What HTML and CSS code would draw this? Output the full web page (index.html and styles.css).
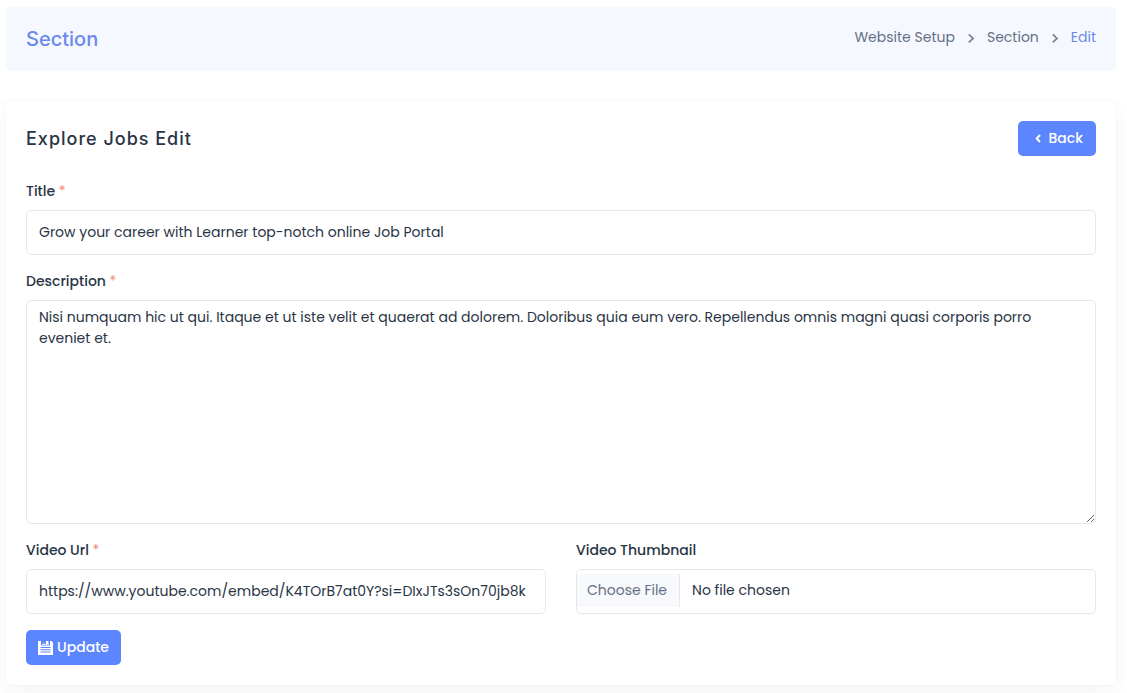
FILE: index.html
```html
<!DOCTYPE html>
<html lang="en">
<head>
  <meta charset="utf-8">
  <meta name="viewport" content="width=device-width, initial-scale=1">
  <title>Section Edit</title>
  <link rel="stylesheet" href="styles.css">
</head>
<body>
  <main class="page">
    <header class="page-header">
      <h1 class="page-title">Section</h1>
      <nav aria-label="Breadcrumb">
        <ol class="breadcrumb">
          <li><a href="#">Website Setup</a></li>
          <li><svg class="chevron" viewBox="0 0 8 10" aria-hidden="true"><path d="M1.8 1.4 6 5.4 1.8 9.4"/></svg><a href="#">Section</a></li>
          <li><svg class="chevron" viewBox="0 0 8 10" aria-hidden="true"><path d="M1.8 1.4 6 5.4 1.8 9.4"/></svg><a class="current" href="#" aria-current="page">Edit</a></li>
        </ol>
      </nav>
    </header>

    <section class="card">
      <div class="card-header">
        <h2 class="card-title">Explore Jobs Edit</h2>
        <a class="btn btn-back" href="#">
          <svg class="icon-back" viewBox="0 0 6 9" aria-hidden="true"><path d="M5 1 1.7 4.5 5 8"/></svg>
          Back
        </a>
      </div>

      <form class="form">
        <div class="field">
          <label class="label" for="title">Title <span class="required">*</span></label>
          <input class="control" id="title" type="text" value="Grow your career with Learner top-notch online Job Portal">
        </div>
        <div class="field">
          <label class="label" for="description">Description <span class="required">*</span></label>
          <textarea class="control textarea" id="description">Nisi numquam hic ut qui. Itaque et ut iste velit et quaerat ad dolorem. Doloribus quia eum vero. Repellendus omnis magni quasi corporis porro eveniet et.</textarea>
        </div>
        <div class="row">
          <div class="field">
            <label class="label" for="video-url">Video Url <span class="required">*</span></label>
            <input class="control" id="video-url" type="text" value="https://www.youtube.com/embed/K4TOrB7at0Y?si=DIxJTs3sOn70jb8k">
          </div>
          <div class="field">
            <label class="label" for="thumbnail">Video Thumbnail</label>
            <input class="control file" id="thumbnail" type="file">
          </div>
        </div>
        <button class="btn btn-update" type="submit">
          <svg class="icon-save" viewBox="0 0 15 14" aria-hidden="true">
            <path fill="currentColor" fill-rule="evenodd" d="M0 0H3V4.5H12V0H13.5L15 1.5V14H0ZM2.5 6V7H12.5V6ZM2.5 8.3V9.3H12.5V8.3ZM2.5 10.6V11.6H12.5V10.6Z"/>
            <path fill="currentColor" d="M4 2.8H11V3.7H4ZM8 0H10.4V3H8Z"/>
          </svg>
          Update
        </button>
      </form>
    </section>
  </main>
</body>
</html>
```
FILE: styles.css
```css
:root {
  --primary: #5c86ff;
  --link: #6b89ec;
  --ink: #293445;
  --muted: #667085;
  --line: #e6e7e9;
  --font: Poppins, Inter, "Open Sans", sans-serif;
}

* { box-sizing: border-box; }

body {
  margin: 0;
  background: #fff;
  color: var(--ink);
  font: 400 14px/21px var(--font);
}

a { color: inherit; text-decoration: none; }

.page {
  display: flex;
  flex-direction: column;
  gap: 30px;
  padding: 7px 11px 8px 6px;
}

.page-header {
  display: flex;
  align-items: flex-start;
  justify-content: space-between;
  padding: 20px;
  border-radius: 5px;
  background: #f5f8ff;
}

.page-title {
  margin: 0;
  color: var(--link);
  font: 500 20px/24px Inter, sans-serif;
}

.breadcrumb {
  display: flex;
  gap: 12px;
  margin: 0;
  padding: 0;
  list-style: none;
  color: var(--muted);
}

.breadcrumb li {
  display: flex;
  align-items: center;
  gap: 12px;
}

.current { color: var(--link); }

.chevron {
  width: 8px;
  height: 10px;
  overflow: visible;
  fill: none;
  stroke: #7c8498;
  stroke-width: 1.8;
}

.card {
  padding: 20px;
  border-radius: 5px;
  background: #fff;
  box-shadow: 0 0 1px rgba(40, 50, 80, 0.12), 0 8px 20px rgba(40, 50, 80, 0.05);
}

.card-header {
  display: flex;
  align-items: center;
  justify-content: space-between;
  margin-bottom: 25px;
}

.card-title {
  margin: 0;
  font: 500 18px/24px Inter, sans-serif;
  letter-spacing: 1px;
}

.btn {
  display: inline-flex;
  align-items: center;
  height: 35px;
  border: 0;
  border-radius: 5px;
  background: var(--primary);
  color: #fff;
  font: 500 14px/21px var(--font);
  cursor: pointer;
}

.btn-back { gap: 8px; padding: 0 13px 0 17px; }
.btn-update { align-self: flex-start; gap: 4px; padding: 0 12px; }

.icon-back {
  width: 6px;
  height: 9px;
  fill: none;
  stroke: currentColor;
  stroke-width: 2;
}

.icon-save { width: 15px; height: 14px; }

.form {
  display: flex;
  flex-direction: column;
  gap: 16px;
}

.field {
  display: flex;
  flex-direction: column;
  gap: 8px;
  min-width: 0;
}

.row {
  display: grid;
  grid-template-columns: 1fr 1fr;
  gap: 30px;
}

.label { font-weight: 500; }
.required { color: #f08c78; font-weight: 400; }

.control {
  width: 100%;
  height: 45px;
  padding: 6px 12px;
  border: 1px solid var(--line);
  border-radius: 5px;
  background: #fff;
  color: var(--ink);
  font: 400 14px/21px var(--font);
}

.textarea {
  height: 224px;
  resize: vertical;
}

.file {
  padding: 4px 12px 4px 0;
  overflow: hidden;
}

.file::file-selector-button {
  height: 33px;
  margin: 0 12px 0 0;
  padding: 0 12px 0 10px;
  border: 0;
  border-right: 1px solid var(--line);
  background: #f8f9fc;
  color: var(--muted);
  font: inherit;
}
```
